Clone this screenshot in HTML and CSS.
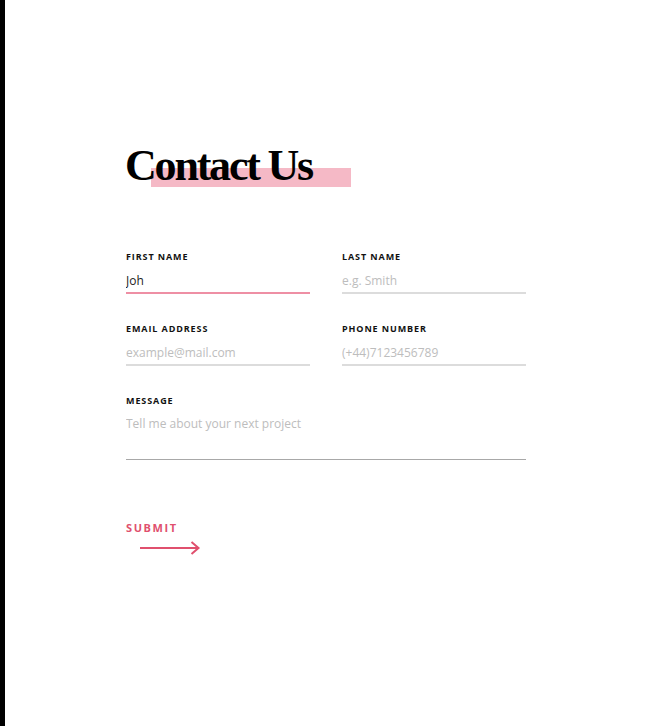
FILE: index.html
```html
<!DOCTYPE html>
<html lang="en">
<head>
<meta charset="utf-8">
<title>Contact Us</title>
<link rel="stylesheet" href="styles.css">
</head>
<body>
<div class="bar"></div>
<main class="page">
  <h1 class="title"><span class="hl"></span><span class="title-text">Contact Us</span></h1>
  <form class="form">
    <div class="grid">
      <label class="field">
        <span class="label">First Name</span>
        <input class="input active" type="text" value="Joh">
      </label>
      <label class="field">
        <span class="label">Last Name</span>
        <input class="input" type="text" placeholder="e.g. Smith">
      </label>
      <label class="field">
        <span class="label">Email Address</span>
        <input class="input" type="text" placeholder="example@mail.com">
      </label>
      <label class="field">
        <span class="label">Phone Number</span>
        <input class="input" type="text" placeholder="(+44)7123456789">
      </label>
    </div>
    <label class="field message">
      <span class="label">Message</span>
      <textarea class="input area" placeholder="Tell me about your next project"></textarea>
    </label>
    <button class="submit" type="button">
      <span class="submit-text">Submit</span>
      <svg class="arrow" width="62" height="14" viewBox="0 0 62 14" aria-hidden="true">
        <path d="M1 7 H59" stroke="#e0506e" stroke-width="2" fill="none"/>
        <path d="M52.5 1 L59.5 7 L52.5 13" stroke="#e0506e" stroke-width="2" fill="none" stroke-linejoin="miter"/>
      </svg>
    </button>
  </form>
</main>
</body>
</html>
```

FILE: styles.css
```css
* { box-sizing: border-box; }
html, body { margin: 0; padding: 0; background: #fff; }
body {
  display: flex;
  min-height: 726px;
  font-family: "Open Sans", "Liberation Sans", sans-serif;
  color: #111;
}
.bar {
  width: 5px;
  flex: 0 0 5px;
  background: #000;
}
.page {
  flex: 1;
  padding: 144px 0 0 121px;
}
.title {
  position: relative;
  margin: 0 0 63px -1px;
  font-family: "Liberation Serif", "DejaVu Serif", serif;
  font-weight: 700;
  font-size: 44px;
  line-height: 44px;
  letter-spacing: -2.2px;
  color: #000;
  display: inline-block;
}
.title-text { position: relative; z-index: 1; }
.hl {
  position: absolute;
  left: 26px;
  top: 24px;
  width: 200px;
  height: 19px;
  background: #f5b9c6;
  z-index: 0;
}
.form { width: 400px; display: flex; flex-direction: column; }
.grid {
  display: grid;
  grid-template-columns: 184px 184px;
  column-gap: 32px;
}
.field {
  display: flex;
  flex-direction: column;
  margin-bottom: 29px;
}
.label {
  font-size: 9px;
  line-height: 12px;
  font-weight: 700;
  letter-spacing: 0.9px;
  text-transform: uppercase;
  color: #111;
  margin-bottom: 5px;
}
.input {
  border: none;
  border-bottom: 2px solid #dcdcdc;
  outline: none;
  padding: 0;
  margin: 0;
  height: 26px;
  line-height: 24px;
  font-family: "Open Sans", "Liberation Sans", sans-serif;
  font-size: 12px;
  color: #222;
  background: transparent;
  width: 100%;
}
.input::placeholder { color: #bdbdbd; }
.input.active { border-bottom-color: #ee8fa4; }
.message { width: 400px; margin-bottom: 61px; }
.area {
  resize: none;
  height: 48px;
  border-bottom: 1.5px solid #a8a8a8;
  display: block;
}
.submit {
  align-self: flex-start;
  border: none;
  background: none;
  padding: 0;
  margin: 0;
  display: flex;
  flex-direction: column;
  align-items: flex-start;
  cursor: pointer;
}
.submit-text {
  font-family: "Open Sans", "Liberation Sans", sans-serif;
  font-weight: 700;
  font-size: 11px;
  line-height: 14px;
  letter-spacing: 1.6px;
  text-transform: uppercase;
  color: #e0506e;
}
.arrow { margin: 6px 0 0 13px; display: block; }
```
